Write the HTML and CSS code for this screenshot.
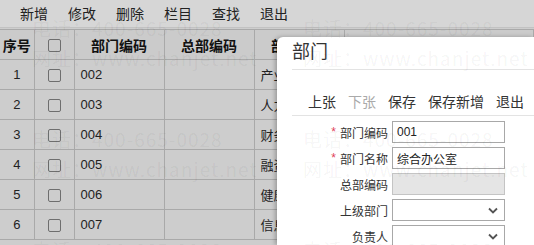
FILE: index.html
```html
<!DOCTYPE html>
<html lang="zh-CN">
<head>
  <meta charset="UTF-8">
  <title>部门</title>
  <link rel="stylesheet" href="styles.css">
</head>
<body>
<div class="topbar">
  <span>新增</span>
  <span>修改</span>
  <span>删除</span>
  <span>栏目</span>
  <span>查找</span>
  <span>退出</span>
</div>

<table class="grid">
  <colgroup>
    <col style="width:34px">
    <col style="width:40px">
    <col style="width:90px">
    <col style="width:90px">
    <col style="width:90px">
    <col>
  </colgroup>
  <thead>
    <tr>
      <th>序号</th>
      <th><span class="chk"></span></th>
      <th>部门编码</th>
      <th>总部编码</th>
      <th>部门名称</th>
      <th>负责人</th>
    </tr>
  </thead>
  <tbody>
    <tr><td class="no">1</td><td class="ck"><span class="chk"></span></td><td>002</td><td></td><td>产业发展部</td><td></td></tr>
    <tr><td class="no">2</td><td class="ck"><span class="chk"></span></td><td>003</td><td></td><td>人力资源部</td><td></td></tr>
    <tr><td class="no">3</td><td class="ck"><span class="chk"></span></td><td>004</td><td></td><td>财务部</td><td></td></tr>
    <tr><td class="no">4</td><td class="ck"><span class="chk"></span></td><td>005</td><td></td><td>融资部</td><td></td></tr>
    <tr><td class="no">5</td><td class="ck"><span class="chk"></span></td><td>006</td><td></td><td>健康事业部</td><td></td></tr>
    <tr><td class="no">6</td><td class="ck"><span class="chk"></span></td><td>007</td><td></td><td>信息部</td><td></td></tr>
  </tbody>
</table>

<!-- 弹出框 -->
<div class="dialog">
  <div class="dlg-title">部门</div>
  <div class="dlg-tools">
    <span>上张</span>
    <span class="off">下张</span>
    <span>保存</span>
    <span>保存新增</span>
    <span>退出</span>
  </div>
  <div class="form">
    <div class="row">
      <label><i>*</i>部门编码</label>
      <input type="text" value="001">
    </div>
    <div class="row">
      <label><i>*</i>部门名称</label>
      <input type="text" value="综合办公室">
    </div>
    <div class="row">
      <label>总部编码</label>
      <input type="text" disabled>
    </div>
    <div class="row">
      <label>上级部门</label>
      <div class="select">
        <svg width="10" height="7" viewBox="0 0 10 7"><path d="M1 1.5 L5 5.5 L9 1.5" fill="none" stroke="#555" stroke-width="1.8"/></svg>
      </div>
    </div>
    <div class="row">
      <label>负责人</label>
      <div class="select">
        <svg width="10" height="7" viewBox="0 0 10 7"><path d="M1 1.5 L5 5.5 L9 1.5" fill="none" stroke="#555" stroke-width="1.8"/></svg>
      </div>
    </div>
  </div>
</div>

<!-- 水印 -->
<div class="watermark">
  <div class="tile"><p>电话：400-665-0028</p><p>网址：www.chanjet.net</p></div>
  <div class="tile"><p>电话：400-665-0028</p><p>网址：www.chanjet.net</p></div>
  <div class="tile"><p>电话：400-665-0028</p><p>网址：www.chanjet.net</p></div>
  <div class="tile"><p>电话：400-665-0028</p><p>网址：www.chanjet.net</p></div>
  <div class="tile"><p>电话：400-665-0028</p></div>
  <div class="tile"><p>电话：400-665-0028</p></div>
</div>
</body>
</html>
```

FILE: styles.css
```css
* {
  margin: 0;
  padding: 0;
  box-sizing: border-box;
}
html, body {
  width: 534px;
  height: 245px;
  overflow: hidden;
}
body {
  position: relative;
  background: #cdcdcd;
  font-family: "Liberation Sans", "Noto Sans CJK SC", sans-serif;
  color: #222;
}

/* 顶部工具栏 */
.topbar {
  height: 28px;
  display: flex;
  align-items: center;
  gap: 20px;
  padding: 0 0 2px 20px;
  background: #d6d6d6;
  border-bottom: 1px solid #c2c2c2;
  font-size: 14px;
  color: #222;
}

/* 表格 */
.grid {
  margin-top: 1px;
  border-collapse: collapse;
  table-layout: fixed;
  width: 534px;
  font-size: 13px;
}
.grid th,
.grid td {
  height: 30px;
  border: 1px solid #a9a9a9;
  padding: 0 6px;
  text-align: left;
  white-space: nowrap;
  overflow: hidden;
}
.grid tr > :first-child {
  border-left: none;
}
.grid th {
  background: #cbcbcb;
  font-size: 14px;
  font-weight: bold;
  text-align: center;
  color: #111;
}
.grid td {
  background: #cdcdcd;
}
.grid th:first-child {
  padding: 0 2px;
}
.grid .no,
.grid .ck {
  text-align: center;
}
.chk {
  display: inline-block;
  width: 13px;
  height: 13px;
  border: 1px solid #6e6e6e;
  border-radius: 2px;
  vertical-align: middle;
}

/* 弹出框 */
.dialog {
  position: absolute;
  left: 277px;
  top: 37px;
  width: 257px;
  height: 208px;
  overflow: hidden;
  background: #fff;
  border-radius: 6px 0 0 0;
  box-shadow: -2px 0 4px rgba(0, 0, 0, 0.25);
}
.dlg-title {
  margin-left: 15px;
  height: 33px;
  line-height: 30px;
  border-bottom: 1px solid #e3e3e3;
  font-size: 18px;
  color: #333;
}
.dlg-tools {
  margin-left: 15px;
  display: flex;
  gap: 12px;
  padding: 22px 0 3px 16px;
  border-bottom: 1px solid #e3e3e3;
  font-size: 14px;
  line-height: 20px;
  color: #333;
  white-space: nowrap;
}
.dlg-tools .off {
  color: #aaa;
}
.form {
  padding-top: 5px;
}
.form .row {
  display: flex;
  align-items: center;
  gap: 4px;
  height: 22px;
  margin-bottom: 4px;
}
.form label {
  width: 111px;
  text-align: right;
  font-size: 12px;
  color: #333;
}
.form label i {
  font-style: normal;
  color: #e0425a;
  margin-right: 4px;
  position: relative;
  top: -2px;
}
.form input,
.form .select {
  width: 113px;
  height: 22px;
  border: 1px solid #a8a8a8;
  padding: 0 4px;
  font-family: "Liberation Sans", "Noto Sans CJK SC", sans-serif;
  font-size: 12px;
  color: #222;
  background: #fff;
  outline: none;
}
.form input:disabled {
  background: #e5e5e5;
  border-color: #c4c4c4;
}
.form .select {
  display: flex;
  align-items: center;
  justify-content: flex-end;
  padding-right: 6px;
}

/* 水印 */
.watermark {
  position: absolute;
  left: 0;
  top: 0;
  width: 534px;
  height: 245px;
  overflow: hidden;
  padding: 13px 0 0 32px;
  display: grid;
  grid-template-columns: repeat(2, 271px);
  grid-auto-rows: 111px;
  pointer-events: none;
  font-family: "Noto Sans CJK SC", sans-serif;
  font-size: 19px;
  line-height: 30px;
  letter-spacing: 1px;
  color: rgba(0, 0, 0, 0.05);
  white-space: nowrap;
}
```
